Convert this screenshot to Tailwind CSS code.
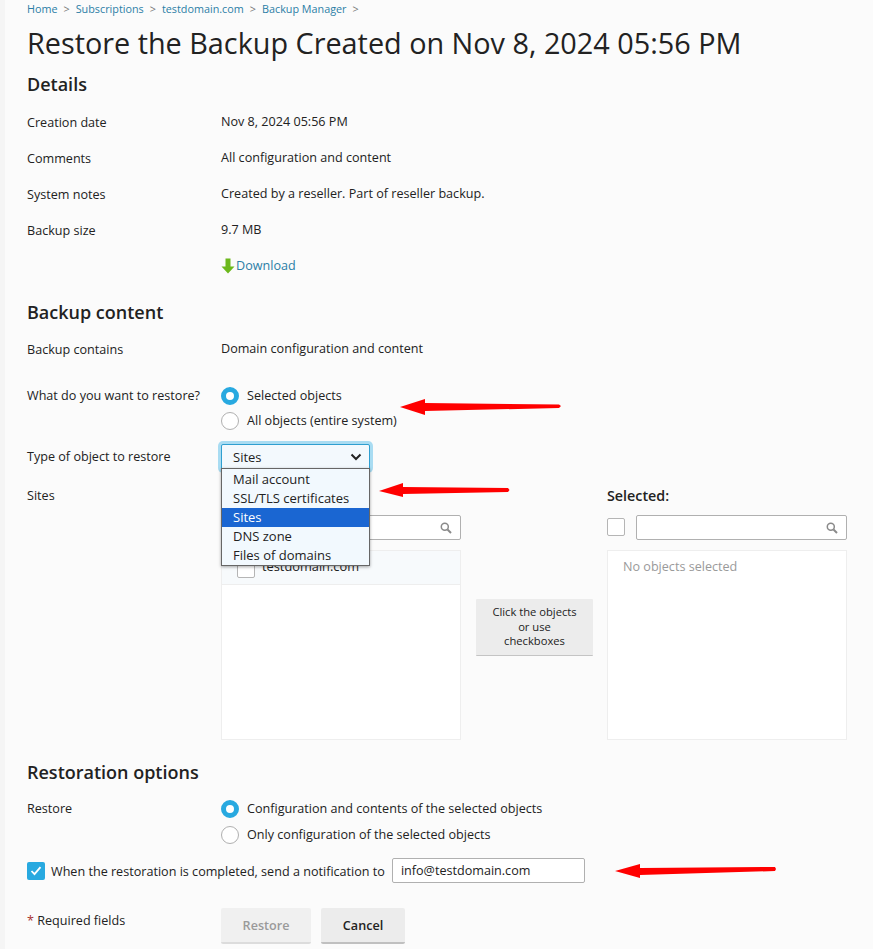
<!DOCTYPE html>
<html lang="en">
<head>
  <meta charset="UTF-8" />
  <title>Restore the Backup</title>
  <script src="https://cdn.jsdelivr.net/npm/@tailwindcss/browser@4"></script>
</head>
<body class="bg-[#fbfbfb] text-[#222222] font-['Open_Sans',sans-serif] text-[12.6px] leading-[18px] h-[949px] overflow-hidden relative">
  <div class="absolute left-0 top-0 bottom-0 w-[5px] bg-[#f5f5f5]"></div>

  <div class="pl-[27px] pr-[26px] relative h-[949px]">
    <!-- breadcrumbs -->
    <nav class="h-[18px] flex items-center text-[10.8px] text-[#2b7ea6] gap-[6px]">
      <span>Home</span><span class="text-[#777777]">&gt;</span>
      <span>Subscriptions</span><span class="text-[#777777]">&gt;</span>
      <span>testdomain.com</span><span class="text-[#777777]">&gt;</span>
      <span>Backup Manager</span><span class="text-[#777777]">&gt;</span>
    </nav>

    <h1 class="text-[28.8px] leading-[40px] mt-[5px]">Restore the Backup Created on Nov 8, 2024 05:56 PM</h1>

    <h2 class="text-[18px] leading-[24px] font-semibold mt-[9px]">Details</h2>
    <div class="mt-[8px]">
      <div class="flex h-[36px] pt-[2px] items-center"><div class="w-[194px]">Creation date</div><div class="-mt-[2px]">Nov 8, 2024 05:56 PM</div></div>
      <div class="flex h-[36px] pt-[2px] items-center"><div class="w-[194px]">Comments</div><div class="-mt-[2px]">All configuration and content</div></div>
      <div class="flex h-[36px] pt-[2px] items-center"><div class="w-[194px]">System notes</div><div class="-mt-[2px]">Created by a reseller. Part of reseller backup.</div></div>
      <div class="flex h-[36px] pt-[2px] items-center"><div class="w-[194px]">Backup size</div><div class="-mt-[2px]">9.7 MB</div></div>
      <div class="flex h-[36px] items-center">
        <div class="w-[194px]"></div>
        <svg width="14" height="16" viewBox="0 0 14 16" class="-mt-[1px]"><path d="M4.5 0.5h5v8h4L7 15.5 0.5 8.500h4z" fill="#6cb81c"/></svg>
        <a class="text-[#2b7ea6] -mt-[1px] ml-px">Download</a>
      </div>
    </div>

    <h2 class="text-[18px] leading-[24px] font-semibold mt-[16px]">Backup content</h2>
    <div class="flex h-[36px] pt-[2px] items-center mt-[7px]"><div class="w-[194px]">Backup contains</div><div class="-mt-[2px]">Domain configuration and content</div></div>

    <div class="flex mt-[20px]">
      <div class="w-[194px] leading-[18px]">What do you want to restore?</div>
      <div class="flex flex-col gap-[7px]">
        <label class="flex items-center gap-[8px] h-[18px]">
          <span class="w-[18px] h-[18px] rounded-full border-[5px] border-[#28a9e0] bg-white"></span>
          <span class="-mt-[1px]">Selected objects</span>
        </label>
        <label class="flex items-center gap-[8px] h-[18px]">
          <span class="w-[18px] h-[18px] rounded-full border border-[#b0b0b0] bg-white"></span>
          <span class="-mt-[1px]">All objects (entire system)</span>
        </label>
      </div>
    </div>

    <div class="flex mt-[14px] items-center h-[26px]">
      <div class="w-[194px]">Type of object to restore</div>
      <div class="w-[149px] h-[26px] text-[13px] bg-[#f3f9fd] border border-[#2f9fd0] ring-[3px] ring-[#a9dcf2] rounded-[2px] flex items-center justify-between pl-[11px] pr-[7px]">
        <span>Sites</span>
        <svg width="12" height="8" viewBox="0 0 12 8"><path d="M1.500 1.500 6 6l4.500-4.500" fill="none" stroke="#222222" stroke-width="2"/></svg>
      </div>
    </div>

    <!-- object pickers -->
    <div class="flex mt-[15px]">
      <div class="w-[194px] mt-[2px]">Sites</div>
      <div class="w-[240px]">
        <div class="h-[18px] mt-[2px]"></div>
        <div class="flex gap-[10px] mt-[10px]">
          <span class="w-[18px] h-[18px] mt-[3px] border border-[#b5b5b5] rounded-[2px] bg-white shrink-0"></span>
          <div class="flex-1 h-[25px] bg-white border border-[#b0b0b0] rounded-[2px] flex items-center justify-end pr-[8px]">
            <svg width="12" height="12" viewBox="0 0 12 12"><circle cx="4.800" cy="4.800" r="3.500" fill="none" stroke="#8a8a8a" stroke-width="1.500"/><path d="M7.500 7.500 11 11" stroke="#8a8a8a" stroke-width="2"/></svg>
          </div>
        </div>
        <div class="mt-[10px] h-[190px] bg-white border border-[#eeeeee]">
          <div class="h-[34px] bg-[#f7fafc] border-b border-[#eeeeee] flex items-center pl-[15px] gap-[7px]">
            <span class="w-[18px] h-[18px] mt-[2px] border border-[#b5b5b5] rounded-[2px] bg-white"></span>
            <span class="-mt-[4px] text-[12.800px]">testdomain.com</span>
          </div>
        </div>
      </div>

      <div class="w-[146px] flex flex-col pt-[114px] pl-[15px] pr-[14px]">
        <div class="w-[117px] h-[57px] bg-[#ececec] border-b border-[#c4c4c4] rounded-[1px] text-[11.200px] leading-[14.500px] text-center flex items-center justify-center">
          Click the objects<br />or use<br />checkboxes
        </div>
      </div>

      <div class="w-[240px]">
        <div class="h-[18px] mt-[2px] font-semibold text-[14.300px]">Selected:</div>
        <div class="flex gap-[11px] mt-[10px]">
          <span class="w-[18px] h-[18px] mt-[3px] border border-[#b5b5b5] rounded-[2px] bg-white shrink-0"></span>
          <div class="flex-1 h-[25px] bg-white border border-[#b0b0b0] rounded-[2px] flex items-center justify-end pr-[8px]">
            <svg width="12" height="12" viewBox="0 0 12 12"><circle cx="4.800" cy="4.800" r="3.500" fill="none" stroke="#8a8a8a" stroke-width="1.500"/><path d="M7.500 7.500 11 11" stroke="#8a8a8a" stroke-width="2"/></svg>
          </div>
        </div>
        <div class="mt-[10px] h-[190px] bg-white border border-[#eeeeee] pl-[15px] pt-[7px] text-[#9a9a9a]">No objects selected</div>
      </div>
    </div>

    <h2 class="text-[18px] leading-[24px] font-semibold mt-[20px]">Restoration options</h2>
    <div class="flex mt-[16px]">
      <div class="w-[194px]">Restore</div>
      <div class="flex flex-col gap-[8px]">
        <label class="flex items-center gap-[8px] h-[18px]">
          <span class="w-[18px] h-[18px] rounded-full border-[5px] border-[#28a9e0] bg-white"></span>
          <span class="-mt-[1px]">Configuration and contents of the selected objects</span>
        </label>
        <label class="flex items-center gap-[8px] h-[18px]">
          <span class="w-[18px] h-[18px] rounded-full border border-[#b0b0b0] bg-white"></span>
          <span class="-mt-[1px]">Only configuration of the selected objects</span>
        </label>
      </div>
    </div>

    <div class="flex items-center mt-[14px] h-[25px]">
      <span class="w-[18px] h-[18px] rounded-[2px] bg-[#28a9e0] flex items-center justify-center">
        <svg width="12" height="10" viewBox="0 0 12 10"><path d="M1.500 5 4.500 8.200 10.500 1.200" fill="none" stroke="#ffffff" stroke-width="1.800"/></svg>
      </span>
      <span class="ml-[6px] pt-[2px]">When the restoration is completed, send a notification to</span>
      <div class="ml-[7px] w-[193px] h-[25px] bg-white border border-[#b0b0b0] rounded-[2px] pl-[8px] flex items-center">info@testdomain.com</div>
    </div>

    <div class="flex mt-[25px]">
      <div class="w-[194px] mt-[4px]"><span class="text-[#a83232]">*</span> Required fields</div>
      <button class="w-[90px] h-[36px] pt-[2px] bg-[#f0f0f0] border-b-2 border-[#dcdcdc] rounded-[2px] text-[#9a9a9a] font-semibold">Restore</button>
      <button class="w-[84px] h-[36px] pt-[2px] ml-[10px] bg-[#ececec] border-b-2 border-[#c0c0c0] rounded-[2px] font-semibold">Cancel</button>
    </div>

    <!-- open select dropdown -->
    <ul class="absolute left-[221px] top-[468px] w-[149px] h-[98px] pt-px text-[13px] bg-[#f2f9fe] border border-[#666666] shadow-[0_1px_3px_rgba(0,0,0,0.35)] leading-[19px]">
      <li class="pl-[11px] h-[19px]">Mail account</li>
      <li class="pl-[11px] h-[19px]">SSL/TLS certificates</li>
      <li class="pl-[11px] h-[19px] bg-[#1a66d2] text-white">Sites</li>
      <li class="pl-[11px] h-[19px]">DNS zone</li>
      <li class="pl-[11px] h-[19px]">Files of domains</li>
    </ul>
  </div>

  <!-- red annotation arrows -->
  <svg class="absolute left-0 top-0 pointer-events-none" width="873" height="949" viewBox="0 0 873 949">
    <path d="M400 407 425 399 425 403 559 404.500 561 406 559 408 425 411 425 415z" fill="#ff0000"/>
    <path d="M379 491 403 483 403 487 508 488 509.500 490 508 492 403 494 403 497z" fill="#ff0000"/>
    <path d="M615 871 640 864 640 868 775 867 776 869 775 871 640 875 640 878z" fill="#ff0000"/>
  </svg>
</body>
</html>
